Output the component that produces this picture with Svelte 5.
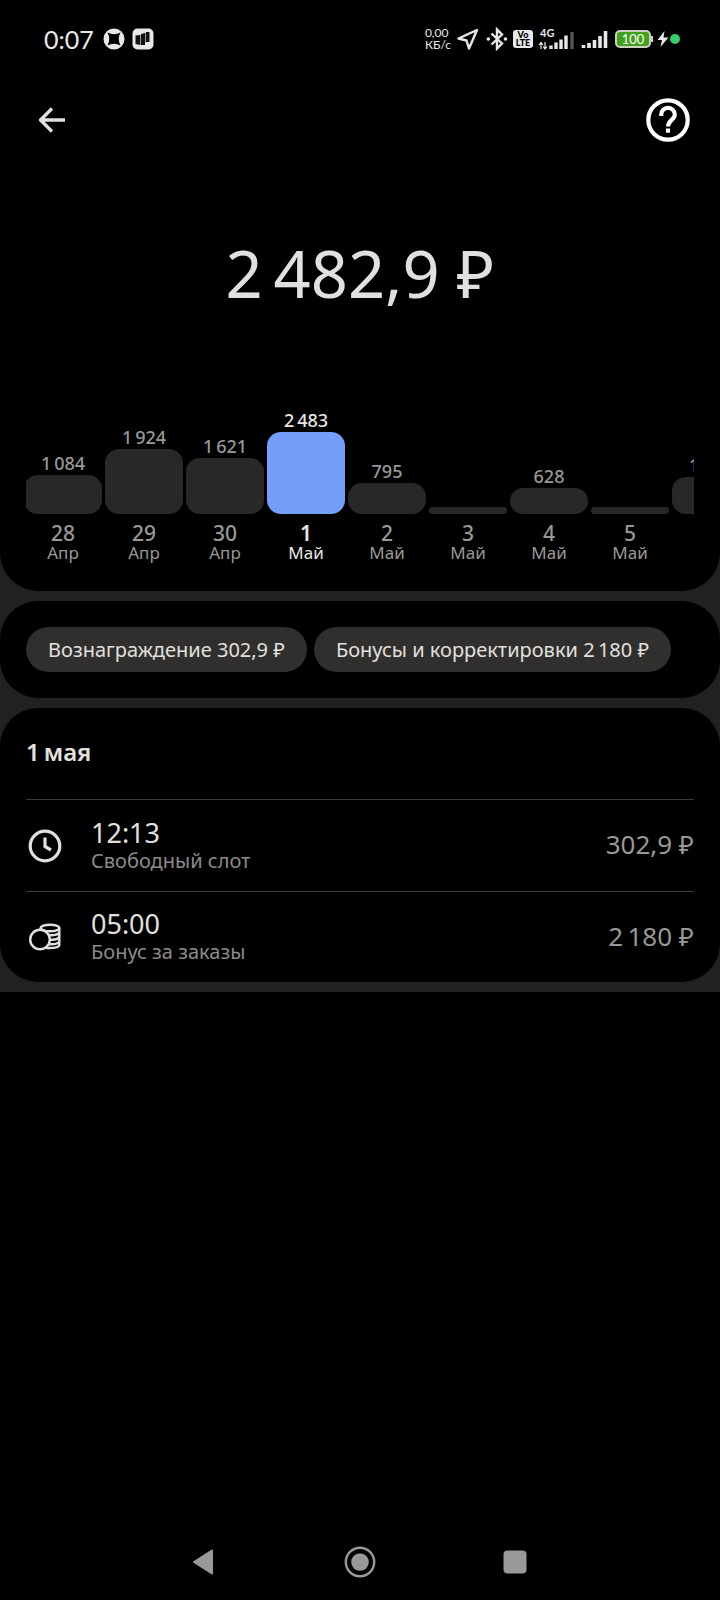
<script>
  const thin = '\u2009';
  const days = [
    { day: '28', month: 'Апр', value: `1${thin}084`, height: 39 },
    { day: '29', month: 'Апр', value: `1${thin}924`, height: 65 },
    { day: '30', month: 'Апр', value: `1${thin}621`, height: 56 },
    { day: '1', month: 'Май', value: `2${thin}483`, height: 82 },
    { day: '2', month: 'Май', value: '795', height: 31 },
    { day: '3', month: 'Май', value: '', height: 7 },
    { day: '4', month: 'Май', value: '628', height: 26 },
    { day: '5', month: 'Май', value: '', height: 7 },
    { day: '6', month: 'Май', value: `1${thin}021`, height: 37 }
  ];
  const chips = [`Вознаграждение 302,9 ₽`, `Бонусы и корректировки 2${thin}180 ₽`];
  const entries = [
    { icon: 'clock', time: '12:13', title: 'Свободный слот', sum: '302,9 ₽' },
    { icon: 'coins', time: '05:00', title: 'Бонус за заказы', sum: `2${thin}180 ₽` }
  ];
  let selected = $state(3);
</script>

<div class="screen">
  <div class="status">
    <div class="status-left">
      <span class="clock">0:07</span>
      <svg width="22" height="22" viewBox="0 0 22 22" aria-hidden="true">
        <circle cx="11" cy="11" r="10.5" fill="#e8e8e8" />
        <path d="M4.5 4.5Q11 8 17.500 4.500Q14 11 17.500 17.500Q11 14 4.500 17.500Q8 11 4.500 4.500Z" fill="#000" />
      </svg>
      <svg width="22" height="22" viewBox="0 0 22 22" aria-hidden="true">
        <rect x="0.500" y="0.500" width="21" height="21" rx="5" fill="#e8e8e8" />
        <path d="M3.500 7.500L8 7V17L3.500 16Z M9 6L13 5V17H9Z M14 4H17.500V14H14Z" fill="#111" />
        <path d="M8.500 7V17M13.500 4.500V15" stroke="#999" stroke-width="1" />
      </svg>
    </div>
    <div class="status-right">
      <span class="speed"><span>0,00</span><span>КБ/с</span></span>
      <svg class="loc" width="22" height="22" viewBox="0 0 22 22" aria-hidden="true">
        <path d="M20 2L1.500 10.500L9.500 12.500L12 20.500Z" fill="none" stroke="#e8e8e8" stroke-width="2.400" stroke-linejoin="round" />
      </svg>
      <svg class="bt" width="22" height="24" viewBox="0 0 22 24" aria-hidden="true">
        <path d="M5.500 6.500L16 16.500L11 21.500V2.500L16 7.500L5.500 17.500" fill="none" stroke="#e8e8e8" stroke-width="2.400" />
        <circle cx="2.300" cy="12" r="1.800" fill="#e8e8e8" /><circle cx="19.500" cy="12" r="1.800" fill="#e8e8e8" />
      </svg>
      <span class="volte"><span>Vo</span><span>LTE</span></span>
      <svg class="cell" width="37" height="24" viewBox="0 -2 37 24" aria-hidden="true">
        <text x="2" y="8" font-size="11" font-weight="700" fill="#e8e8e8">4G</text>
        <path d="M3 20V14M1 16L3 13.500L5 16M7 13V19M5 17.500L7 20L9 17.500" fill="none" stroke="#e8e8e8" stroke-width="1.200" />
        <path d="M13 20V16.500M18 20V13.500M23 20V10.500M28 20V6.500" stroke="#e8e8e8" stroke-width="3.400" />
        <path d="M34 20V3" stroke="#555" stroke-width="3.400" />
      </svg>
      <svg class="cell2" width="28" height="22" viewBox="0 0 28 22" aria-hidden="true">
        <path d="M2.500 20V17M8 20V15M13.500 20V12M19 20V8M24.500 20V3" stroke="#e8e8e8" stroke-width="3.600" />
      </svg>
      <span class="battery">100</span><span class="battery-tip"></span>
      <svg class="bolt" width="12" height="16" viewBox="0 0 12 16" aria-hidden="true">
        <path d="M7.500 0L0.500 9H5L3.500 16L11.500 6.500H6.500Z" fill="#e8e8e8" />
      </svg>
      <span class="dot"></span>
    </div>
  </div>

  <main>
    <section class="card summary">
      <header>
        <button class="icon-button" aria-label="Назад">
          <svg width="28" height="28" viewBox="0 0 28 28">
            <path d="M27 14H2.500M14 2.500L2.500 14L14 25.500" fill="none" stroke="#e2e0de" stroke-width="3.400" stroke-linejoin="round" />
          </svg>
        </button>
        <button class="icon-button" aria-label="Помощь">
          <svg width="44" height="44" viewBox="0 0 44 44">
            <circle cx="22" cy="22" r="19.700" fill="none" stroke="#fff" stroke-width="4.200" />
            <path d="M15.200 18V16.500A6.700 6.700 0 0 1 28.800 16.700C28.800 21.500 22 22.500 22 28.500" fill="none" stroke="#fff" stroke-width="4.200" />
            <rect x="19.900" y="30.500" width="4.200" height="4.200" fill="#fff" />
          </svg>
        </button>
      </header>
      <h1>2{thin}482,9 ₽</h1>
      <div class="chart">
        {#each days as d, i}
          <button class="column" class:active={selected === i} onclick={() => (selected = i)}>
            <span class="plot">
              <span class="value">{d.value}</span>
              <span class="bar" style:height="{d.height}px"></span>
            </span>
            <span class="day">{d.day}</span>
            <span class="month">{d.month}</span>
          </button>
        {/each}
      </div>
    </section>

    <section class="card chips">
      {#each chips as chip}<button class="chip">{chip}</button>{/each}
    </section>

    <section class="card details">
      <h2>1{thin}мая</h2>
      <ul>
        {#each entries as e}
          <li>
            {#if e.icon === 'clock'}
              <svg width="38" height="38" viewBox="0 0 38 38" aria-hidden="true">
                <circle cx="19" cy="19" r="14.800" fill="none" stroke="#e2e0de" stroke-width="3.200" />
                <path d="M19 10.500V19.500L25 23" fill="none" stroke="#e2e0de" stroke-width="3.200" />
              </svg>
            {:else}
              <svg width="38" height="38" viewBox="0 0 38 38" aria-hidden="true">
                <g fill="none" stroke="#e2e0de" stroke-width="2.400">
                  <ellipse cx="24" cy="10" rx="9.300" ry="3.300" />
                  <path d="M14.700 10V14.500M33.300 10V27C33 29.500 28 30.300 20 30M33 15C31 17.500 25 17.500 20 17M33 19.500C31 22 27 22 23 21.500M33 24C31 26.500 27 26.500 22.500 26.200" />
                  <circle cx="14" cy="21.500" r="9.800" fill="#000" />
                </g>
              </svg>
            {/if}
            <div class="entry">
              <span class="time">{e.time}</span>
              <span class="title">{e.title}</span>
            </div>
            <span class="sum">{e.sum}</span>
          </li>
        {/each}
      </ul>
    </section>
  </main>

  <nav>
    <button aria-label="Назад">
      <svg width="32" height="32" viewBox="0 0 32 32"><path d="M5 16L23 4.500V27.500Z" fill="#999" stroke="#999" stroke-width="2" stroke-linejoin="round" /></svg>
    </button>
    <button aria-label="Домой">
      <svg width="32" height="32" viewBox="0 0 32 32"><circle cx="16" cy="16" r="14.200" fill="none" stroke="#999" stroke-width="2.400" /><circle cx="16" cy="16" r="8.800" fill="#999" /></svg>
    </button>
    <button aria-label="Недавние">
      <svg width="32" height="32" viewBox="0 0 32 32"><rect x="4.500" y="4.500" width="23" height="23" rx="4" fill="#999" /></svg>
    </button>
  </nav>
</div>

<style>
  :global(body) { background: #000; }
  .screen {
    min-height: 100vh;
    display: flex;
    flex-direction: column;
    background: #000;
    color: #e2e0de;
    font-family: "Noto Sans", sans-serif;
  }
  button {
    padding: 0;
    border: 0;
    background: none;
    color: inherit;
    font: inherit;
    cursor: pointer;
  }
  svg { display: block; flex: none; }
  .status {
    display: flex;
    justify-content: space-between;
    align-items: center;
    height: 78px;
    padding: 0 40px 0 44px;
    color: #e8e8e8;
    font-family: Lato, sans-serif;
  }
  .status-left, .status-right { display: flex; align-items: center; }
  .status-left { gap: 7px; }
  .clock { font-size: 25px; line-height: 30px; margin-right: 2px; }
  .speed { display: flex; flex-direction: column; font-size: 12px; line-height: 12px; }
  .loc { margin-left: 6px; }
  .bt { margin-left: 7px; }
  .volte {
    display: flex;
    flex-direction: column;
    align-items: center;
    width: 20px;
    margin-left: 5px;
    padding: 1px 0;
    border-radius: 3px;
    background: #e8e8e8;
    color: #000;
    font-size: 9px;
    font-weight: 900;
    line-height: 8px;
  }
  .cell { margin-left: 5px; }
  .cell2 { margin-left: 6px; }
  .battery {
    box-sizing: border-box;
    width: 36px;
    height: 18px;
    margin-left: 6px;
    border: 2px solid #c8d0c0;
    border-radius: 5px;
    background: #43a01c;
    color: #fff;
    font-size: 13px;
    line-height: 14px;
    text-align: center;
  }
  .battery-tip { width: 2px; height: 6px; background: #c8d0c0; }
  .bolt { margin-left: 4px; }
  .dot { width: 10px; height: 10px; margin-left: 1px; border-radius: 50%; background: #35d06b; }

  main {
    display: flex;
    flex-direction: column;
    gap: 10px;
    padding-bottom: 10px;
    background: #22211f;
  }
  .card { background: #000; border-radius: 38px; }
  .summary { border-radius: 0 0 38px 38px; padding: 0 26px 28px; }
  header {
    display: flex;
    justify-content: space-between;
    align-items: center;
    height: 84px;
    margin-right: -18px;
  }
  .icon-button { display: flex; justify-content: center; width: 88px; }
  .icon-button:first-child { width: 52px; }
  h1 {
    margin: 66px 0 82px;
    font-size: 65px;
    font-weight: 400;
    line-height: 90px;
    text-align: center;
  }
  .chart { display: flex; gap: 3px; overflow: hidden; }
  .column {
    display: flex;
    flex-direction: column;
    flex: none;
    width: 78px;
    color: #999896;
    text-align: center;
  }
  .column:first-child { margin-left: -2px; }
  .plot {
    display: flex;
    flex-direction: column;
    justify-content: flex-end;
    height: 114px;
  }
  .value { font-size: 18px; font-weight: 500; line-height: 24px; }
  .bar { border-radius: 14px; background: #282828; }
  .day { margin-top: 9px; font-size: 21px; font-weight: 500; line-height: 20px; }
  .month { font-size: 17px; line-height: 20px; }
  .active { color: #e8e6e4; }
  .active .bar { background: #739ffb; }
  .active .day { font-weight: 600; }
  .chips { display: flex; flex-wrap: wrap; gap: 7px; padding: 26px; }
  .chip {
    padding: 0 22px;
    border-radius: 23px;
    background: #302f2e;
    font-size: 20px;
    line-height: 45px;
    white-space: nowrap;
  }
  .details { padding: 0 26px; }
  h2 { margin: 0; font-size: 24px; font-weight: 600; line-height: 34px; padding: 27px 0 30px; }
  ul { margin: 0; padding: 0; list-style: none; }
  li {
    display: flex;
    align-items: center;
    height: 91px;
    border-top: 1px solid #3a3a39;
  }
  li:last-child { height: 90px; }
  .entry { display: flex; flex-direction: column; flex: 1; margin-left: 27px; }
  .time { font-size: 27px; line-height: 30px; }
  .title { font-size: 20px; line-height: 26px; color: #8c8b89; }
  .sum { font-size: 26px; line-height: 32px; padding-bottom: 3px; color: #999896; }
  nav {
    display: flex;
    justify-content: center;
    gap: 123px;
    margin-top: auto;
    padding-bottom: 22px;
  }
</style>
